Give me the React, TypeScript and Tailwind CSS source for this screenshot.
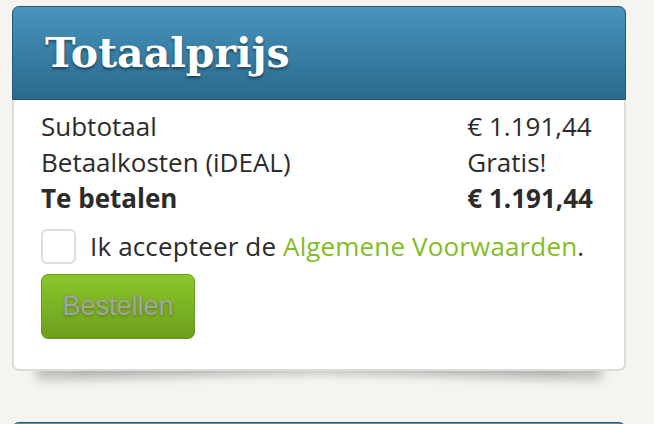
import React from "react";

const rows = [
  { label: "Subtotaal", value: "€ 1.191,44", bold: false },
  { label: "Betaalkosten (iDEAL)", value: "Gratis!", bold: false },
  { label: "Te betalen", value: "€ 1.191,44", bold: true },
];

export default function App() {
  return (
    <div className="min-h-screen bg-[#f5f4f0] pt-[6px] pl-[12px] font-['Open_Sans',sans-serif] overflow-hidden">
      <div className="w-[614px]">
        {/* Totaalprijs card */}
        <div className="relative isolate">
          {/* lifted-corner shadows */}
          <div className="absolute -z-10 left-[24px] bottom-[14px] w-[46%] h-[24px] rotate-[-2deg] shadow-[0_18px_12px_rgba(0,0,0,0.24)] bg-[#ccc]" />
          <div className="absolute -z-10 right-[24px] bottom-[14px] w-[46%] h-[24px] rotate-[2deg] shadow-[0_18px_12px_rgba(0,0,0,0.24)] bg-[#ccc]" />
          <div className="absolute -z-10 left-[60px] right-[60px] bottom-[14px] h-[24px] shadow-[0_16px_14px_rgba(0,0,0,0.1)] bg-[#ccc]" />

          <div className="h-[94px] rounded-t-[7px] border border-[#1f5878] bg-gradient-to-b from-[#4894bd] to-[#2a6a8d] flex items-center pl-[32px]">
            <h2 className="font-['DejaVu_Serif',serif] font-bold text-[41px] leading-none text-white [text-shadow:0_2px_3px_rgba(0,0,0,0.45)] mt-[1px]">
              Totaalprijs
            </h2>
          </div>

          <div className="bg-white border-2 border-t-0 border-[#dcdcdc] rounded-b-[7px] pl-[27px] pr-[31px] pt-[8px] pb-[30px] text-[#2b2b2b]">
            <div className="grid grid-cols-[1fr_auto] text-[26px] leading-[36px]">
              {rows.map((r) => (
                <React.Fragment key={r.label}>
                  <div className={r.bold ? "font-bold" : ""}>{r.label}</div>
                  <div className={r.bold ? "font-bold" : ""}>{r.value}</div>
                </React.Fragment>
              ))}
            </div>

            <label className="mt-[12px] flex items-center gap-[14px] text-[26px] leading-[36px] tracking-[0.15px]">
              <span className="w-[35px] h-[35px] shrink-0 rounded-[6px] border-2 border-[#dcdcdc] bg-white" />
              <span>
                Ik accepteer de <span className="text-[#82bd26]">Algemene Voorwaarden</span>.
              </span>
            </label>

            <button
              disabled
              className="mt-[10px] w-[154px] h-[65px] rounded-[7px] border border-[#6a991d] bg-gradient-to-b from-[#8cc62a] to-[#6c9f1d] font-['Liberation_Sans',sans-serif] text-[27px] text-[#a3a3a3] [text-shadow:0_1px_3px_rgba(0,0,0,0.3)]"
            >
              Bestellen
            </button>
          </div>
        </div>

        {/* next card header (cut off) */}
        <div className="mt-[51px] h-[94px] rounded-t-[7px] border border-[#1f5878] bg-gradient-to-b from-[#4894bd] to-[#2a6a8d]" />
      </div>
    </div>
  );
}
